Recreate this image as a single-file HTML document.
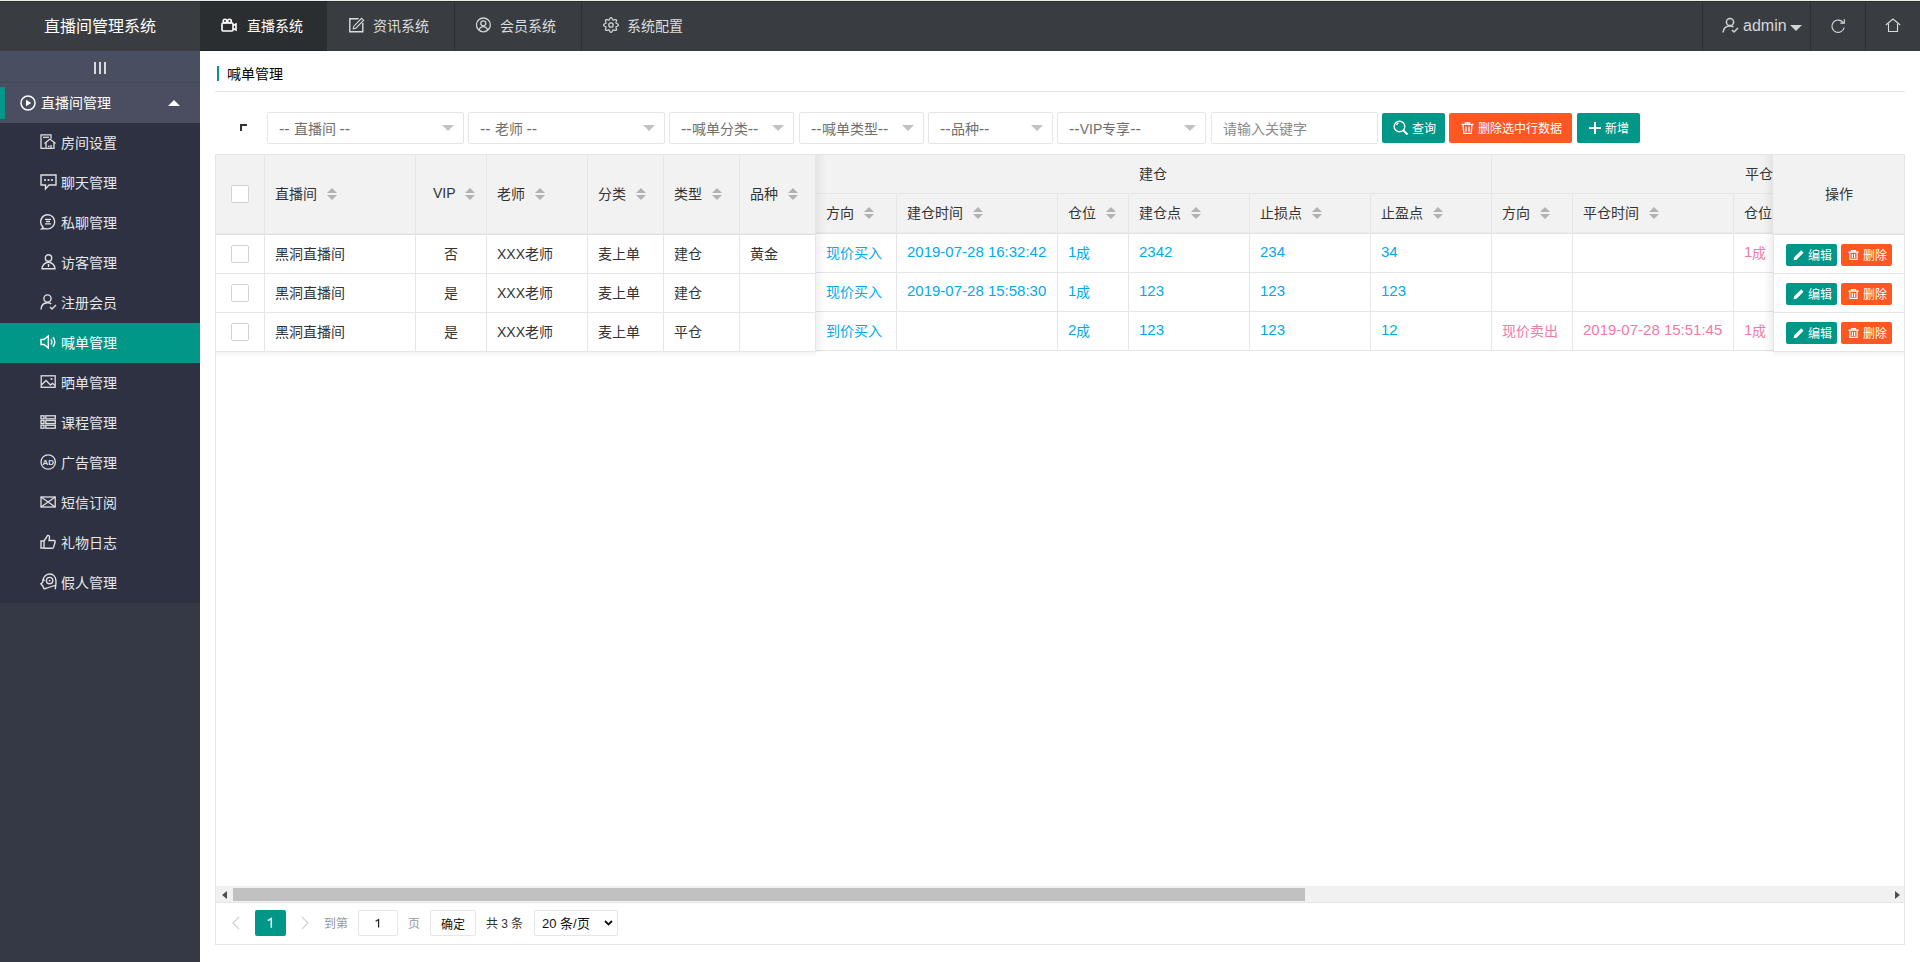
<!DOCTYPE html>
<html lang="zh-CN">
<head>
<meta charset="utf-8">
<title>直播间管理系统</title>
<style>
*{margin:0;padding:0;box-sizing:border-box;}
html,body{width:1920px;height:962px;overflow:hidden;background:#fff;font-family:"Liberation Sans",sans-serif;font-size:14px;color:#333;position:relative;}
.a{position:absolute;}
.t{position:absolute;white-space:nowrap;line-height:1;}
svg{position:absolute;overflow:visible;}
.navsep{position:absolute;top:1px;width:1px;height:50px;background:#2c3034;}
.navt{position:absolute;top:19px;font-size:14px;line-height:14px;color:#dcdddf;white-space:nowrap;}
.mi{position:absolute;left:61px;font-size:14px;line-height:14px;color:#e6e7ea;white-space:nowrap;}

.sel{height:32px;border:1px solid #e6e6e6;border-radius:2px;background:#fff;}
.sel>span{position:absolute;left:11px;top:9px;font-size:14px;line-height:14px;color:#6f6f6f;white-space:nowrap;}
.sel i{position:absolute;right:9px;top:12px;width:0;height:0;border-left:6px solid transparent;border-right:6px solid transparent;border-top:6px solid #c2c2c2;}
.btn{top:113px;height:30px;background:#009688;border-radius:2px;}
.btn>span{position:absolute;top:10px;font-size:12px;line-height:12px;color:#fff;white-space:nowrap;}
.vl{width:1px;background:#e6e6e6;}
.th{font-size:14px;line-height:14px;color:#333;}
.td{font-size:14px;line-height:14px;color:#333;}
.sort{position:absolute;width:10px;height:12px;}
.sort:before{content:"";position:absolute;left:0;top:0;border-left:5px solid transparent;border-right:5px solid transparent;border-bottom:5px solid #b2b2b2;}
.sort:after{content:"";position:absolute;left:0;top:7px;border-left:5px solid transparent;border-right:5px solid transparent;border-top:5px solid #b2b2b2;}
.cb{width:18px;height:18px;border:1px solid #d2d2d2;border-radius:2px;background:#fff;}
.bxs{height:22px;width:51px;background:#009688;border-radius:2px;}
.bxs>span{position:absolute;top:6px;font-size:12px;line-height:12px;color:#fff;white-space:nowrap;}

.n{font-size:15px;line-height:0;position:relative;top:-2px;}
.m{top:-1px;}
.x{font-size:14px;}
.d{font-size:16px;line-height:0;}
</style>
</head>
<body>
<!-- ================= HEADER ================= -->
<div class="a" style="left:0;top:0;width:1920px;height:1px;background:#ececec;"></div>
<div class="a" style="left:0;top:1px;width:1920px;height:50px;background:#393d41;border-top:1px solid #2a2e31;"></div>
<div class="a" style="left:200px;top:1px;width:127px;height:50px;background:#2a2e31;border-top:1px solid #202427;border-bottom:1px solid #1f2326;"></div>
<div class="navsep" style="left:454px"></div>
<div class="navsep" style="left:581px"></div>
<div class="navsep" style="left:1702px"></div>
<div class="navsep" style="left:1810px"></div>
<div class="navsep" style="left:1865px"></div>
<div class="t" style="left:44px;top:19px;font-size:16px;line-height:16px;color:#fff;">直播间管理系统</div>

<!-- nav 1 camera -->
<svg style="left:221px;top:18px" width="16" height="14" viewBox="0 0 16 14"><g fill="none" stroke="#fff" stroke-width="1.6"><rect x="1" y="5" width="11" height="8" rx="1"/><circle cx="4" cy="3" r="1.8"/><circle cx="8.5" cy="3" r="1.8"/><path d="M12 7.5 L15 6 V12 L12 10.5"/></g></svg>
<div class="navt" style="left:247px;color:#fff;">直播系统</div>
<!-- nav 2 edit -->
<svg style="left:349px;top:17px" width="16" height="16" viewBox="0 0 16 16"><g fill="none" stroke="#dcdddf" stroke-width="1.4"><path d="M9.5 1.8 H0.8 V14.8 H13.8 V6"/><path d="M4.2 11.8 L4.8 9.2 L12.6 1.4 L14.6 3.4 L6.8 11.2 Z" stroke-width="1.1"/></g></svg>
<div class="navt" style="left:373px;">资讯系统</div>
<!-- nav 3 user circle -->
<svg style="left:475px;top:17px" width="17" height="17" viewBox="0 0 17 17"><g fill="none" stroke="#d0d2d4" stroke-width="1.3"><circle cx="8.4" cy="7.9" r="6.9"/><circle cx="8.3" cy="6.3" r="2.5"/><path d="M3.9 13 C4.8 10.6 6.4 9.6 8.3 9.6 C10.2 9.6 11.8 10.6 12.8 13"/></g></svg>
<div class="navt" style="left:500px;">会员系统</div>
<!-- nav 4 gear -->
<svg style="left:603px;top:17px" width="16" height="16" viewBox="0 0 16 16"><g fill="none" stroke="#d0d2d4" stroke-width="1.3"><path d="M15.40 8.00 L15.25 8.48 L14.84 8.90 L14.28 9.25 L13.70 9.53 L13.24 9.78 L12.99 10.07 L12.96 10.45 L13.11 10.95 L13.32 11.56 L13.47 12.20 L13.46 12.79 L13.23 13.23 L12.79 13.46 L12.20 13.47 L11.56 13.32 L10.95 13.11 L10.45 12.96 L10.07 12.99 L9.78 13.24 L9.53 13.70 L9.25 14.28 L8.90 14.84 L8.48 15.25 L8.00 15.40 L7.52 15.25 L7.10 14.84 L6.75 14.28 L6.47 13.70 L6.22 13.24 L5.93 12.99 L5.55 12.96 L5.05 13.11 L4.44 13.32 L3.80 13.47 L3.21 13.46 L2.77 13.23 L2.54 12.79 L2.53 12.20 L2.68 11.56 L2.89 10.95 L3.04 10.45 L3.01 10.07 L2.76 9.78 L2.30 9.53 L1.72 9.25 L1.16 8.90 L0.75 8.48 L0.60 8.00 L0.75 7.52 L1.16 7.10 L1.72 6.75 L2.30 6.47 L2.76 6.22 L3.01 5.93 L3.04 5.55 L2.89 5.05 L2.68 4.44 L2.53 3.80 L2.54 3.21 L2.77 2.77 L3.21 2.54 L3.80 2.53 L4.44 2.68 L5.05 2.89 L5.55 3.04 L5.93 3.01 L6.22 2.76 L6.47 2.30 L6.75 1.72 L7.10 1.16 L7.52 0.75 L8.00 0.60 L8.48 0.75 L8.90 1.16 L9.25 1.72 L9.53 2.30 L9.78 2.76 L10.07 3.01 L10.45 3.04 L10.95 2.89 L11.56 2.68 L12.20 2.53 L12.79 2.54 L13.23 2.77 L13.46 3.21 L13.47 3.80 L13.32 4.44 L13.11 5.05 L12.96 5.55 L12.99 5.93 L13.24 6.22 L13.70 6.47 L14.28 6.75 L14.84 7.10 L15.25 7.52 L15.40 8.00Z"/><circle cx="8" cy="8" r="2.2"/></g></svg>
<div class="navt" style="left:627px;">系统配置</div>

<!-- right header -->
<svg style="left:1722px;top:17px" width="17" height="16" viewBox="0 0 17 16"><g fill="none" stroke="#d0d2d4" stroke-width="1.5"><circle cx="8" cy="5" r="3.6"/><path d="M1 15.5 C1.5 11 4 9 8 9 C9.5 9 10.5 9.3 11.5 10"/><path d="M10 13 L12 15 L16 11"/></g></svg>
<div class="t" style="left:1743px;top:18px;font-size:16px;line-height:16px;color:#d6d7d9;">admin</div>
<svg style="left:1790px;top:25px" width="12" height="6" viewBox="0 0 12 6"><path d="M0 0 H12 L6 6 Z" fill="#d0d2d4"/></svg>
<svg style="left:1830px;top:18px" width="16" height="15" viewBox="0 0 16 15"><g fill="none" stroke="#d8d9db" stroke-width="1.2"><path d="M13.3 4.8 A6.2 6.2 0 1 0 14.2 9.5"/><path d="M14.3 1.2 V5.2 H10.3"/></g></svg>
<svg style="left:1885px;top:18px" width="16" height="15" viewBox="0 0 16 15"><g fill="none" stroke="#d8d9db" stroke-width="1.1"><path d="M0.8 7 L8 1 L15.2 7"/><path d="M3.5 5.5 V13.5 H12.5 V5.5"/></g></svg>

<!-- ================= SIDEBAR ================= -->
<div class="a" style="left:0;top:51px;width:200px;height:911px;background:#353845;"></div>
<div class="a" style="left:0;top:51px;width:200px;height:32px;background:#4a4e61;border-bottom:1px solid #434858;"></div>
<div class="a" style="left:94px;top:62px;width:2px;height:12px;background:#d8d9dd;"></div>
<div class="a" style="left:99px;top:62px;width:2px;height:12px;background:#d8d9dd;"></div>
<div class="a" style="left:104px;top:62px;width:2px;height:12px;background:#d8d9dd;"></div>
<div class="a" style="left:0;top:83px;width:200px;height:40px;background:#4a4e60;"></div>
<div class="a" style="left:0;top:87px;width:5px;height:32px;background:#009688;"></div>
<svg style="left:20px;top:95px" width="16" height="16" viewBox="0 0 16 16"><g fill="none" stroke="#fff" stroke-width="1.5"><circle cx="8" cy="8" r="7"/></g><path d="M6 4.8 L11.2 8 L6 11.2 Z" fill="#fff"/></svg>
<div class="t" style="left:41px;top:96px;font-size:14px;line-height:14px;color:#fff;">直播间管理</div>
<svg style="left:168px;top:100px" width="12" height="6" viewBox="0 0 12 6"><path d="M0 6 H12 L6 0 Z" fill="#fff"/></svg>
<div class="a" style="left:0;top:123px;width:200px;height:480px;background:#2e3141;"></div>
<div class="a" style="left:0;top:323px;width:200px;height:40px;background:#009688;"></div>


<!-- sidebar icons -->
<svg style="left:40px;top:134px" width="16" height="15" viewBox="0 0 16 15"><g fill="none" stroke="#dfe0e3" stroke-width="1.3"><path d="M5.5 14.3 H1 V0.8 H11 V4.5"/><path d="M3 3.3 H9"/><path d="M4.5 9.5 L10 5 L15.5 9.5"/><path d="M6 8.5 V14.3 H14 V8.5"/><path d="M8 12.5 H9.5 M11 11 V14"/></g></svg>
<svg style="left:40px;top:174px" width="17" height="16" viewBox="0 0 17 16"><g fill="none" stroke="#dfe0e3" stroke-width="1.4"><path d="M1 1 H16 V11 H9 L5.5 15 V11 H1 Z"/></g><g fill="#dfe0e3"><circle cx="5" cy="6" r="1.1"/><circle cx="8.5" cy="6" r="1.1"/><circle cx="12" cy="6" r="1.1"/></g></svg>
<svg style="left:40px;top:214px" width="16" height="16" viewBox="0 0 16 16"><g fill="none" stroke="#dfe0e3" stroke-width="1.3"><path d="M3.2 13.2 A7 7 0 1 1 6 14.6 L1.5 15 Z"/><path d="M5 5.3 H11 M6 7.5 H10 M5 9.8 H11"/></g></svg>
<svg style="left:41px;top:254px" width="15" height="16" viewBox="0 0 15 16"><g fill="none" stroke="#dfe0e3" stroke-width="1.4"><circle cx="7.5" cy="4" r="3.2"/><path d="M1 14.8 A6.5 6.5 0 0 1 14 14.8 Z"/><path d="M7.5 10 V13"/></g></svg>
<svg style="left:40px;top:294px" width="17" height="16" viewBox="0 0 17 16"><g fill="none" stroke="#dfe0e3" stroke-width="1.4"><circle cx="7.5" cy="4.5" r="3.6"/><path d="M1 15.5 C1.3 11 3.8 8.8 7.5 8.8 C9 8.8 10.2 9.2 11.2 9.9"/><path d="M10 13 L12 15 L16 11"/></g></svg>
<svg style="left:40px;top:335px" width="16" height="14" viewBox="0 0 16 14"><g fill="none" stroke="#fff" stroke-width="1.4"><path d="M1 4.5 H4 L8.3 1 V13 L4 9.5 H1 Z"/><path d="M10.8 4.5 A3.5 3.5 0 0 1 10.8 9.5"/><path d="M12.8 2.3 A6.5 6.5 0 0 1 12.8 11.7"/></g></svg>
<svg style="left:40px;top:375px" width="16" height="13" viewBox="0 0 16 13"><g fill="none" stroke="#dfe0e3" stroke-width="1.3"><rect x="1.2" y="0.8" width="14" height="11.5"/><path d="M1.5 10 L6 5.5 L10.5 10 L12.5 8.3 L15 10.5"/></g><circle cx="11.5" cy="4" r="1.1" fill="#dfe0e3"/></svg>
<svg style="left:40px;top:415px" width="16" height="14" viewBox="0 0 16 14"><g fill="none" stroke="#dfe0e3" stroke-width="1.3"><rect x="1" y="0.8" width="3" height="3"/><rect x="1" y="5.5" width="3" height="3"/><rect x="1" y="10.2" width="3" height="3"/><rect x="5.8" y="0.8" width="9.5" height="3"/><rect x="5.8" y="5.5" width="9.5" height="3"/><rect x="5.8" y="10.2" width="9.5" height="3"/></g></svg>
<svg style="left:40px;top:454px" width="17" height="16" viewBox="0 0 17 16"><circle cx="8.2" cy="8" r="7.2" fill="none" stroke="#dfe0e3" stroke-width="1.3"/><text x="8.2" y="11" text-anchor="middle" font-family="Liberation Sans" font-size="8" font-weight="bold" fill="#dfe0e3">AD</text></svg>
<svg style="left:40px;top:496px" width="16" height="12" viewBox="0 0 16 12"><g fill="none" stroke="#dfe0e3" stroke-width="1.3"><rect x="1" y="1" width="14.2" height="10"/><path d="M1 1 L15.2 11 M15.2 1 L1 11"/></g></svg>
<svg style="left:40px;top:534px" width="16" height="15" viewBox="0 0 16 15"><g fill="none" stroke="#dfe0e3" stroke-width="1.4"><path d="M1 7 H4 V14 H1 Z"/><path d="M4 7 L7.5 1.5 C9 1 9.6 2 9.5 3.5 L9 6.5 H14 C15 6.5 15.3 7.3 15.1 8 L13.6 13.4 C13.4 14 13 14.2 12.4 14.2 H4"/></g></svg>
<svg style="left:40px;top:573px" width="17" height="17" viewBox="0 0 17 17"><g fill="none" stroke="#dfe0e3" stroke-width="1.4"><path d="M4.2 16.3 L2.8 13 L0.9 10.9 L2.7 9.3 C2.6 4.5 5.6 1 9.6 1 C13.6 1 16 4.2 16 8.2 C16 11.5 15.5 13.8 15.3 16.3"/><circle cx="9.6" cy="7.6" r="3.2"/><path d="M4.2 16 C8 14.6 12 13.4 15.5 12.4"/><path d="M2.6 7.3 H4.8"/></g><circle cx="9.6" cy="7.6" r="0.9" fill="#dfe0e3"/></svg>

<!-- menu items -->
<div class="mi" style="top:136px">房间设置</div>
<div class="mi" style="top:176px">聊天管理</div>
<div class="mi" style="top:216px">私聊管理</div>
<div class="mi" style="top:256px">访客管理</div>
<div class="mi" style="top:296px">注册会员</div>
<div class="mi" style="top:336px;color:#fff">喊单管理</div>
<div class="mi" style="top:376px">晒单管理</div>
<div class="mi" style="top:416px">课程管理</div>
<div class="mi" style="top:456px">广告管理</div>
<div class="mi" style="top:496px">短信订阅</div>
<div class="mi" style="top:536px">礼物日志</div>
<div class="mi" style="top:576px">假人管理</div>

<div class="a" style="left:217px;top:66px;width:2px;height:15px;background:#009688;"></div>
<div class="t" style="left:227px;top:67px;font-size:14px;line-height:14px;color:#000;">喊单管理</div>
<div class="a" style="left:215px;top:91px;width:1690px;height:1px;background:#e2e2e2;"></div>
<div class="a" style="left:240px;top:124px;width:7px;height:2px;background:#333;"></div>
<div class="a" style="left:240px;top:124px;width:2px;height:7px;background:#333;"></div>
<div class="a sel" style="left:267px;top:112px;width:197px;"><span><span class="d">--</span> 直播间 <span class="d">--</span></span><i></i></div>
<div class="a sel" style="left:468px;top:112px;width:197px;"><span><span class="d">--</span> 老师 <span class="d">--</span></span><i></i></div>
<div class="a sel" style="left:669px;top:112px;width:125px;"><span><span class="d">--</span>喊单分类<span class="d">--</span></span><i></i></div>
<div class="a sel" style="left:799px;top:112px;width:125px;"><span><span class="d">--</span>喊单类型<span class="d">--</span></span><i></i></div>
<div class="a sel" style="left:928px;top:112px;width:125px;"><span><span class="d">--</span>品种<span class="d">--</span></span><i></i></div>
<div class="a sel" style="left:1057px;top:112px;width:149px;"><span><span class="d">--</span>VIP专享<span class="d">--</span></span><i></i></div>
<div class="a sel" style="left:1211px;top:112px;width:167px;"><span style="color:#8a8a8a">请输入关键字</span></div>
<div class="a btn" style="left:1382px;width:63px;"><svg style="left:11px;top:7px" width="16" height="16" viewBox="0 0 16 16"><g fill="none" stroke="#fff" stroke-width="1.4"><circle cx="6.5" cy="6.5" r="5.3"/><path d="M10.5 10.5 L14.5 14.5" stroke-width="2"/><path d="M3.6 5 A3 3 0 0 1 5.5 3" /></g></svg><span style="left:30px">查询</span></div>
<div class="a btn" style="left:1449px;width:123px;background:#ff5722;"><svg style="left:12px;top:9px" width="13" height="12" viewBox="0 0 13 12"><g fill="none" stroke="#fff" stroke-width="1.3"><path d="M0.5 2.3 H12.5 M4.5 2.3 V0.8 H8.5 V2.3"/><path d="M2 2.3 L2.8 11.3 H10.2 L11 2.3"/><path d="M5 4.5 V9.5 M8 4.5 V9.5"/></g></svg><span style="left:29px">删除选中行数据</span></div>
<div class="a btn" style="left:1577px;width:63px;"><svg style="left:12px;top:9px" width="12" height="12" viewBox="0 0 12 12"><path d="M6 0 V12 M0 6 H12" stroke="#fff" stroke-width="2"/></svg><span style="left:28px">新增</span></div>
<div class="a" style="left:215px;top:154px;width:1690px;height:791px;border:1px solid #e6e6e6;"></div>
<div class="a" style="left:216px;top:155px;width:1688px;height:78px;background:#f2f2f2;"></div>
<div class="a" style="left:816px;top:232px;width:957px;height:1px;background:#ebebeb;"></div>
<div class="a" style="left:816px;top:233px;width:957px;height:1px;background:#e2e2e2;"></div>
<div class="a" style="left:815px;top:193px;width:958px;height:1px;background:#e6e6e6;"></div>
<div class="a vl" style="left:896px;top:194px;height:157px;"></div>
<div class="a vl" style="left:1057px;top:194px;height:157px;"></div>
<div class="a vl" style="left:1128px;top:194px;height:157px;"></div>
<div class="a vl" style="left:1249px;top:194px;height:157px;"></div>
<div class="a vl" style="left:1370px;top:194px;height:157px;"></div>
<div class="a vl" style="left:1491px;top:155px;height:196px;"></div>
<div class="a vl" style="left:1572px;top:194px;height:157px;"></div>
<div class="a vl" style="left:1733px;top:194px;height:157px;"></div>
<div class="a" style="left:816px;top:272px;width:957px;height:1px;background:#e6e6e6;"></div>
<div class="a" style="left:816px;top:311px;width:957px;height:1px;background:#e6e6e6;"></div>
<div class="a" style="left:816px;top:350px;width:957px;height:1px;background:#e6e6e6;"></div>
<div class="t th" style="left:1139px;top:167px;">建仓</div>
<div class="t th" style="left:1745px;top:167px;">平仓</div>
<div class="t th" style="left:826px;top:206px;">方向</div>
<i class="sort" style="left:864px;top:207px;"></i>
<div class="t th" style="left:907px;top:206px;">建仓时间</div>
<i class="sort" style="left:973px;top:207px;"></i>
<div class="t th" style="left:1068px;top:206px;">仓位</div>
<i class="sort" style="left:1106px;top:207px;"></i>
<div class="t th" style="left:1139px;top:206px;">建仓点</div>
<i class="sort" style="left:1191px;top:207px;"></i>
<div class="t th" style="left:1260px;top:206px;">止损点</div>
<i class="sort" style="left:1312px;top:207px;"></i>
<div class="t th" style="left:1381px;top:206px;">止盈点</div>
<i class="sort" style="left:1433px;top:207px;"></i>
<div class="t th" style="left:1502px;top:206px;">方向</div>
<i class="sort" style="left:1540px;top:207px;"></i>
<div class="t th" style="left:1583px;top:206px;">平仓时间</div>
<i class="sort" style="left:1649px;top:207px;"></i>
<div class="t th" style="left:1744px;top:206px;">仓位</div>
<i class="sort" style="left:1782px;top:207px;"></i>
<div class="t td" style="left:826px;top:246px;color:#01aaed;">现价买入</div>
<div class="t td" style="left:907px;top:246px;color:#01aaed;"><span class="n m">2019-07-28 16:32:42</span></div>
<div class="t td" style="left:1068px;top:246px;color:#01aaed;"><span class="n m">1</span>成</div>
<div class="t td" style="left:1139px;top:246px;color:#01aaed;"><span class="n m">2342</span></div>
<div class="t td" style="left:1260px;top:246px;color:#01aaed;"><span class="n m">234</span></div>
<div class="t td" style="left:1381px;top:246px;color:#01aaed;"><span class="n m">34</span></div>
<div class="t td" style="left:1744px;top:246px;color:#f27aa6;"><span class="n m">1</span>成</div>
<div class="t td" style="left:826px;top:285px;color:#01aaed;">现价买入</div>
<div class="t td" style="left:907px;top:285px;color:#01aaed;"><span class="n m">2019-07-28 15:58:30</span></div>
<div class="t td" style="left:1068px;top:285px;color:#01aaed;"><span class="n m">1</span>成</div>
<div class="t td" style="left:1139px;top:285px;color:#01aaed;"><span class="n m">123</span></div>
<div class="t td" style="left:1260px;top:285px;color:#01aaed;"><span class="n m">123</span></div>
<div class="t td" style="left:1381px;top:285px;color:#01aaed;"><span class="n m">123</span></div>
<div class="t td" style="left:826px;top:324px;color:#01aaed;">到价买入</div>
<div class="t td" style="left:1068px;top:324px;color:#01aaed;"><span class="n m">2</span>成</div>
<div class="t td" style="left:1139px;top:324px;color:#01aaed;"><span class="n m">123</span></div>
<div class="t td" style="left:1260px;top:324px;color:#01aaed;"><span class="n m">123</span></div>
<div class="t td" style="left:1381px;top:324px;color:#01aaed;"><span class="n m">12</span></div>
<div class="t td" style="left:1502px;top:324px;color:#f27aa6;">现价卖出</div>
<div class="t td" style="left:1583px;top:324px;color:#f27aa6;"><span class="n m">2019-07-28 15:51:45</span></div>
<div class="t td" style="left:1744px;top:324px;color:#f27aa6;"><span class="n m">1</span>成</div>
<div class="a" style="left:216px;top:352px;width:600px;height:6px;background:linear-gradient(to bottom,rgba(0,0,0,.045),rgba(0,0,0,0));"></div>
<div class="a" style="left:816px;top:155px;width:10px;height:197px;background:linear-gradient(to right,rgba(0,0,0,.05),rgba(0,0,0,0));"></div>
<div class="a" style="left:216px;top:233px;width:599px;height:1px;background:#ebebeb;"></div>
<div class="a" style="left:216px;top:234px;width:599px;height:1px;background:#e2e2e2;"></div>
<div class="a vl" style="left:264px;top:155px;height:197px;"></div>
<div class="a vl" style="left:415px;top:155px;height:197px;"></div>
<div class="a vl" style="left:486px;top:155px;height:197px;"></div>
<div class="a vl" style="left:587px;top:155px;height:197px;"></div>
<div class="a vl" style="left:663px;top:155px;height:197px;"></div>
<div class="a vl" style="left:739px;top:155px;height:197px;"></div>
<div class="a vl" style="left:815px;top:155px;height:197px;"></div>
<div class="a" style="left:216px;top:273px;width:600px;height:1px;background:#e6e6e6;"></div>
<div class="a" style="left:216px;top:312px;width:600px;height:1px;background:#e6e6e6;"></div>
<div class="a" style="left:216px;top:351px;width:600px;height:1px;background:#e6e6e6;"></div>
<div class="a cb" style="left:231px;top:185px;"></div>
<div class="t th" style="left:275px;top:187px;">直播间</div>
<i class="sort" style="left:327px;top:188px;"></i>
<div class="t th" style="left:433px;top:187px;"><span style="position:relative;top:-1px">VIP</span></div>
<i class="sort" style="left:465px;top:188px;"></i>
<div class="t th" style="left:497px;top:187px;">老师</div>
<i class="sort" style="left:535px;top:188px;"></i>
<div class="t th" style="left:598px;top:187px;">分类</div>
<i class="sort" style="left:636px;top:188px;"></i>
<div class="t th" style="left:674px;top:187px;">类型</div>
<i class="sort" style="left:712px;top:188px;"></i>
<div class="t th" style="left:750px;top:187px;">品种</div>
<i class="sort" style="left:788px;top:188px;"></i>
<div class="a cb" style="left:231px;top:245px;"></div>
<div class="t td" style="left:275px;top:247px;">黑洞直播间</div>
<div class="t td" style="left:444px;top:247px;">否</div>
<div class="t td" style="left:497px;top:247px;"><span class="x">XXX</span>老师</div>
<div class="t td" style="left:598px;top:247px;">麦上单</div>
<div class="t td" style="left:674px;top:247px;">建仓</div>
<div class="t td" style="left:750px;top:247px;">黄金</div>
<div class="a cb" style="left:231px;top:284px;"></div>
<div class="t td" style="left:275px;top:286px;">黑洞直播间</div>
<div class="t td" style="left:444px;top:286px;">是</div>
<div class="t td" style="left:497px;top:286px;"><span class="x">XXX</span>老师</div>
<div class="t td" style="left:598px;top:286px;">麦上单</div>
<div class="t td" style="left:674px;top:286px;">建仓</div>
<div class="a cb" style="left:231px;top:323px;"></div>
<div class="t td" style="left:275px;top:325px;">黑洞直播间</div>
<div class="t td" style="left:444px;top:325px;">是</div>
<div class="t td" style="left:497px;top:325px;"><span class="x">XXX</span>老师</div>
<div class="t td" style="left:598px;top:325px;">麦上单</div>
<div class="t td" style="left:674px;top:325px;">平仓</div>
<div class="a" style="left:1763px;top:155px;width:10px;height:197px;background:linear-gradient(to left,rgba(0,0,0,.06),rgba(0,0,0,0));"></div>
<div class="a" style="left:1773px;top:155px;width:131px;height:197px;background:#fff;"></div>
<div class="a" style="left:1773px;top:352px;width:131px;height:6px;background:linear-gradient(to bottom,rgba(0,0,0,.045),rgba(0,0,0,0));"></div>
<div class="a" style="left:1773px;top:155px;width:131px;height:78px;background:#f2f2f2;"></div>
<div class="a" style="left:1773px;top:233px;width:131px;height:1px;background:#ebebeb;"></div>
<div class="a" style="left:1773px;top:234px;width:131px;height:1px;background:#e2e2e2;"></div>
<div class="a vl" style="left:1773px;top:235px;height:117px;"></div>
<div class="a" style="left:1773px;top:273px;width:131px;height:1px;background:#e6e6e6;"></div>
<div class="a" style="left:1773px;top:312px;width:131px;height:1px;background:#e6e6e6;"></div>
<div class="a" style="left:1773px;top:351px;width:131px;height:1px;background:#e6e6e6;"></div>
<div class="t th" style="left:1825px;top:187px;">操作</div>
<div class="a bxs" style="left:1786px;top:244px;"><svg style="left:7px;top:6px" width="11" height="11" viewBox="0 0 11 11"><path d="M0.5 10.3 L1.2 7.3 L7.6 0.9 C8 0.5 8.5 0.5 8.9 0.9 L10 2 C10.4 2.4 10.4 2.9 10 3.3 L3.6 9.7 Z" fill="#fff"/></svg><span style="left:22px">编辑</span></div>
<div class="a bxs" style="left:1841px;top:244px;background:#ff5722;"><svg style="left:7px;top:6px" width="11" height="10" viewBox="0 0 11 10"><g fill="none" stroke="#fff" stroke-width="1.2"><path d="M0.3 2.2 H10.7 M3.5 2.2 V0.7 H7.5 V2.2"/><path d="M1.9 2.2 V9.4 H9.1 V2.2"/><path d="M4.4 4 V8 M6.6 4 V8"/></g></svg><span style="left:22px">删除</span></div>
<div class="a bxs" style="left:1786px;top:283px;"><svg style="left:7px;top:6px" width="11" height="11" viewBox="0 0 11 11"><path d="M0.5 10.3 L1.2 7.3 L7.6 0.9 C8 0.5 8.5 0.5 8.9 0.9 L10 2 C10.4 2.4 10.4 2.9 10 3.3 L3.6 9.7 Z" fill="#fff"/></svg><span style="left:22px">编辑</span></div>
<div class="a bxs" style="left:1841px;top:283px;background:#ff5722;"><svg style="left:7px;top:6px" width="11" height="10" viewBox="0 0 11 10"><g fill="none" stroke="#fff" stroke-width="1.2"><path d="M0.3 2.2 H10.7 M3.5 2.2 V0.7 H7.5 V2.2"/><path d="M1.9 2.2 V9.4 H9.1 V2.2"/><path d="M4.4 4 V8 M6.6 4 V8"/></g></svg><span style="left:22px">删除</span></div>
<div class="a bxs" style="left:1786px;top:322px;"><svg style="left:7px;top:6px" width="11" height="11" viewBox="0 0 11 11"><path d="M0.5 10.3 L1.2 7.3 L7.6 0.9 C8 0.5 8.5 0.5 8.9 0.9 L10 2 C10.4 2.4 10.4 2.9 10 3.3 L3.6 9.7 Z" fill="#fff"/></svg><span style="left:22px">编辑</span></div>
<div class="a bxs" style="left:1841px;top:322px;background:#ff5722;"><svg style="left:7px;top:6px" width="11" height="10" viewBox="0 0 11 10"><g fill="none" stroke="#fff" stroke-width="1.2"><path d="M0.3 2.2 H10.7 M3.5 2.2 V0.7 H7.5 V2.2"/><path d="M1.9 2.2 V9.4 H9.1 V2.2"/><path d="M4.4 4 V8 M6.6 4 V8"/></g></svg><span style="left:22px">删除</span></div>
<div class="a" style="left:216px;top:886px;width:1688px;height:17px;background:#f1f1f1;border-bottom:1px solid #e6e6e6;"></div>
<div class="a" style="left:233px;top:888px;width:1072px;height:13px;background:#c1c1c1;"></div>
<svg style="left:222px;top:891px" width="5" height="8" viewBox="0 0 5 8"><path d="M5 0 V8 L0 4 Z" fill="#505050"/></svg>
<svg style="left:1895px;top:891px" width="5" height="8" viewBox="0 0 5 8"><path d="M0 0 V8 L5 4 Z" fill="#505050"/></svg>
<svg style="left:232px;top:916px" width="8" height="14" viewBox="0 0 8 14"><path d="M7 1 L1 7 L7 13" fill="none" stroke="#d2d2d2" stroke-width="1.2"/></svg>
<div class="a" style="left:255px;top:910px;width:31px;height:26px;background:#009688;border-radius:2px;"></div>
<svg style="left:267px;top:918px" width="6" height="10" viewBox="0 0 6 10"><path d="M0.8 2.6 L4.3 0.6 V9.8" fill="none" stroke="#fff" stroke-width="1.5"/></svg>
<svg style="left:301px;top:916px" width="8" height="14" viewBox="0 0 8 14"><path d="M1 1 L7 7 L1 13" fill="none" stroke="#d2d2d2" stroke-width="1.2"/></svg>
<div class="t" style="left:324px;top:918px;font-size:12px;line-height:12px;color:#999;">到第</div>
<div class="a" style="left:358px;top:910px;width:40px;height:26px;border:1px solid #e6e6e6;border-radius:2px;"></div>
<svg style="left:375px;top:919px" width="5" height="9" viewBox="0 0 5 9"><path d="M0.6 2.2 L3.6 0.5 V8.6" fill="none" stroke="#222" stroke-width="1.2"/></svg>
<div class="t" style="left:408px;top:918px;font-size:12px;line-height:12px;color:#999;">页</div>
<div class="a" style="left:430px;top:910px;width:46px;height:26px;border:1px solid #e6e6e6;border-radius:2px;font-size:12px;line-height:28px;text-align:center;color:#111;">确定</div>
<div class="t" style="left:486px;top:918px;font-size:12px;line-height:12px;color:#333;">共 3 条</div>
<div class="a" style="left:534px;top:910px;width:84px;height:26px;border:1px solid #e6e6e6;border-radius:2px;"></div>
<div class="t" style="left:542px;top:917px;font-size:13px;line-height:13px;color:#111;">20 条/页</div>
<svg style="left:604px;top:920px" width="9" height="6" viewBox="0 0 9 6"><path d="M1 1 L4.5 4.5 L8 1" fill="none" stroke="#111" stroke-width="1.8"/></svg>
</body>
</html>
